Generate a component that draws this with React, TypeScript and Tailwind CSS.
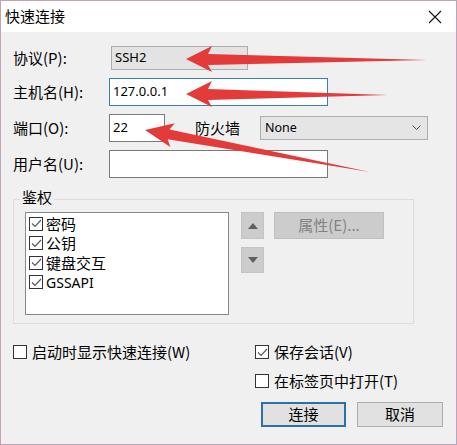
import React from 'react'

const cjk = { fontFamily: "'Noto Sans CJK SC', 'Noto Sans', sans-serif" }
const latin = { fontFamily: "'Noto Sans', 'Noto Sans CJK SC', sans-serif" }

function CheckBox({ checked }: { checked?: boolean }) {
  return (
    <span className="flex h-[14px] w-[14px] shrink-0 items-center justify-center border border-[#333333] bg-white">
      {checked && (
        <svg width="11" height="9" viewBox="0 0 11 9">
          <path d="M1 4.5 L4 7.5 L10 1" fill="none" stroke="#5a5a5a" strokeWidth="1.2" />
        </svg>
      )}
    </span>
  )
}

function Option({ label, checked }: { label: string; checked?: boolean }) {
  return (
    <div className="flex h-[22px] items-center gap-[5px] text-[15px] text-black">
      <CheckBox checked={checked} />
      <span>{label}</span>
    </div>
  )
}

const methods = ['密码', '公钥', '键盘交互', 'GSSAPI']

export default function App() {
  return (
    <div className="relative h-[445px] w-[457px] overflow-hidden" style={cjk}>
      <div className="flex h-full w-full flex-col border border-[#c3a1b7] bg-[#f0f0f0]">
        {/* Title bar */}
        <div className="flex h-[31px] items-center justify-between bg-white pl-[4px] pr-[14px]">
          <span className="text-[15px] text-black">快速连接</span>
          <svg width="14" height="14" viewBox="0 0 14 14">
            <path d="M1 1 L13 13 M13 1 L1 13" stroke="#111" strokeWidth="1.1" />
          </svg>
        </div>

        <div className="flex flex-col px-[12px] pt-[14px]">
          {/* 协议 */}
          <div className="flex h-[24px] items-center">
            <span className="w-[98px] text-[15px] text-black">协议(P):</span>
            <div className="flex h-[24px] w-[137px] items-center border border-[#adadad] bg-[#e3e3e3] px-[3px] text-[13px] text-black" style={latin}>
              SSH2
            </div>
          </div>

          {/* 主机名 */}
          <div className="mt-[8px] flex h-[28px] items-center">
            <span className="w-[96px] text-[15px] text-black">主机名(H):</span>
            <div className="flex h-[28px] w-[219px] items-center border border-[#3c7fb1] bg-white px-[3px] text-[13px] text-black" style={latin}>
              127.0.0.1
            </div>
          </div>

          {/* 端口 */}
          <div className="mt-[8px] flex h-[28px] items-center">
            <span className="w-[96px] text-[15px] text-black">端口(O):</span>
            <div className="flex h-[28px] w-[56px] items-center border border-[#7a7a7a] bg-white px-[3px] text-[13px] text-black" style={latin}>
              22
            </div>
            <span className="ml-[30px] text-[15px] text-black">防火墙</span>
            <div className="ml-[20px] flex h-[24px] w-[168px] items-center justify-between border border-[#adadad] bg-[#e5e5e5] pl-[4px] pr-[6px] text-[12.5px] text-black" style={latin}>
              <span>None</span>
              <svg width="9" height="6" viewBox="0 0 9 6">
                <path d="M0.5 0.5 L4.5 4.5 L8.5 0.5" fill="none" stroke="#555" strokeWidth="1" />
              </svg>
            </div>
          </div>

          {/* 用户名 */}
          <div className="mt-[8px] flex h-[28px] items-center">
            <span className="w-[96px] text-[15px] text-black">用户名(U):</span>
            <div className="h-[28px] w-[219px] border border-[#7a7a7a] bg-white" />
          </div>

          {/* 鉴权 */}
          <fieldset className="mt-[11px] w-[401px] border border-[#dcdcdc] px-[11px] pb-[8px] pt-[3px]">
            <legend className="-ml-[5px] h-[20px] px-[2px] text-[15px] leading-[16px] text-black">鉴权</legend>
            <div className="flex items-start">
              <div className="h-[103px] w-[204px] border border-[#828790] bg-white px-[3px] pt-[1px]">
                {methods.map((m) => (
                  <div key={m} className="flex h-[19.5px] items-center gap-[3px] text-[15px] text-black">
                    <CheckBox checked />
                    <span style={m === 'GSSAPI' ? latin : undefined} className={m === 'GSSAPI' ? 'text-[14px]' : ''}>
                      {m}
                    </span>
                  </div>
                ))}
              </div>
              <div className="ml-[12px] flex flex-col gap-[8px]">
                <div className="flex h-[27px] w-[23px] items-center justify-center border border-[#c4c4c4] bg-[#cccccc]">
                  <svg width="10" height="6" viewBox="0 0 10 6">
                    <path d="M5 0 L10 6 L0 6 Z" fill="#5f5f5f" />
                  </svg>
                </div>
                <div className="flex h-[26px] w-[23px] items-center justify-center border border-[#c4c4c4] bg-[#cccccc]">
                  <svg width="10" height="6" viewBox="0 0 10 6">
                    <path d="M0 0 L10 0 L5 6 Z" fill="#5f5f5f" />
                  </svg>
                </div>
              </div>
              <div className="ml-[10px] flex h-[27px] w-[110px] items-center justify-center border border-[#bfbfbf] bg-[#cccccc] text-[15px] text-[#838383]">
                属性(E)...
              </div>
            </div>
          </fieldset>

          {/* Bottom options */}
          <div className="mt-[17px] flex">
            <div className="w-[242px]">
              <Option label="启动时显示快速连接(W)" />
            </div>
            <div className="flex flex-col">
              <Option label="保存会话(V)" checked />
              <div className="mt-[7px]">
                <Option label="在标签页中打开(T)" />
              </div>
              <div className="ml-[6px] mt-[10px] flex gap-[11px]">
                <button className="flex h-[25px] w-[85px] items-center justify-center border-2 border-[#2f6fa8] bg-[#e1e1e1] text-[15px] text-black">
                  连接
                </button>
                <button className="flex h-[25px] w-[86px] items-center justify-center border border-[#adadad] bg-[#e1e1e1] text-[15px] text-black">
                  取消
                </button>
              </div>
            </div>
          </div>
        </div>
      </div>

      {/* Red annotation arrows */}
      <svg className="pointer-events-none absolute left-0 top-0" width="457" height="445" viewBox="0 0 457 445">
        <polygon points="186,59 212,46 208,54 427,60 208,65 212,72" fill="#e33a3a" />
        <polygon points="186,94 212,81 208,89 388,95 208,100 212,107" fill="#e33a3a" />
        <polygon points="145,130 174.7,123.3 169.5,129.5 370,172 167.7,139.3 170.3,146.9" fill="#e33a3a" />
      </svg>
    </div>
  )
}
